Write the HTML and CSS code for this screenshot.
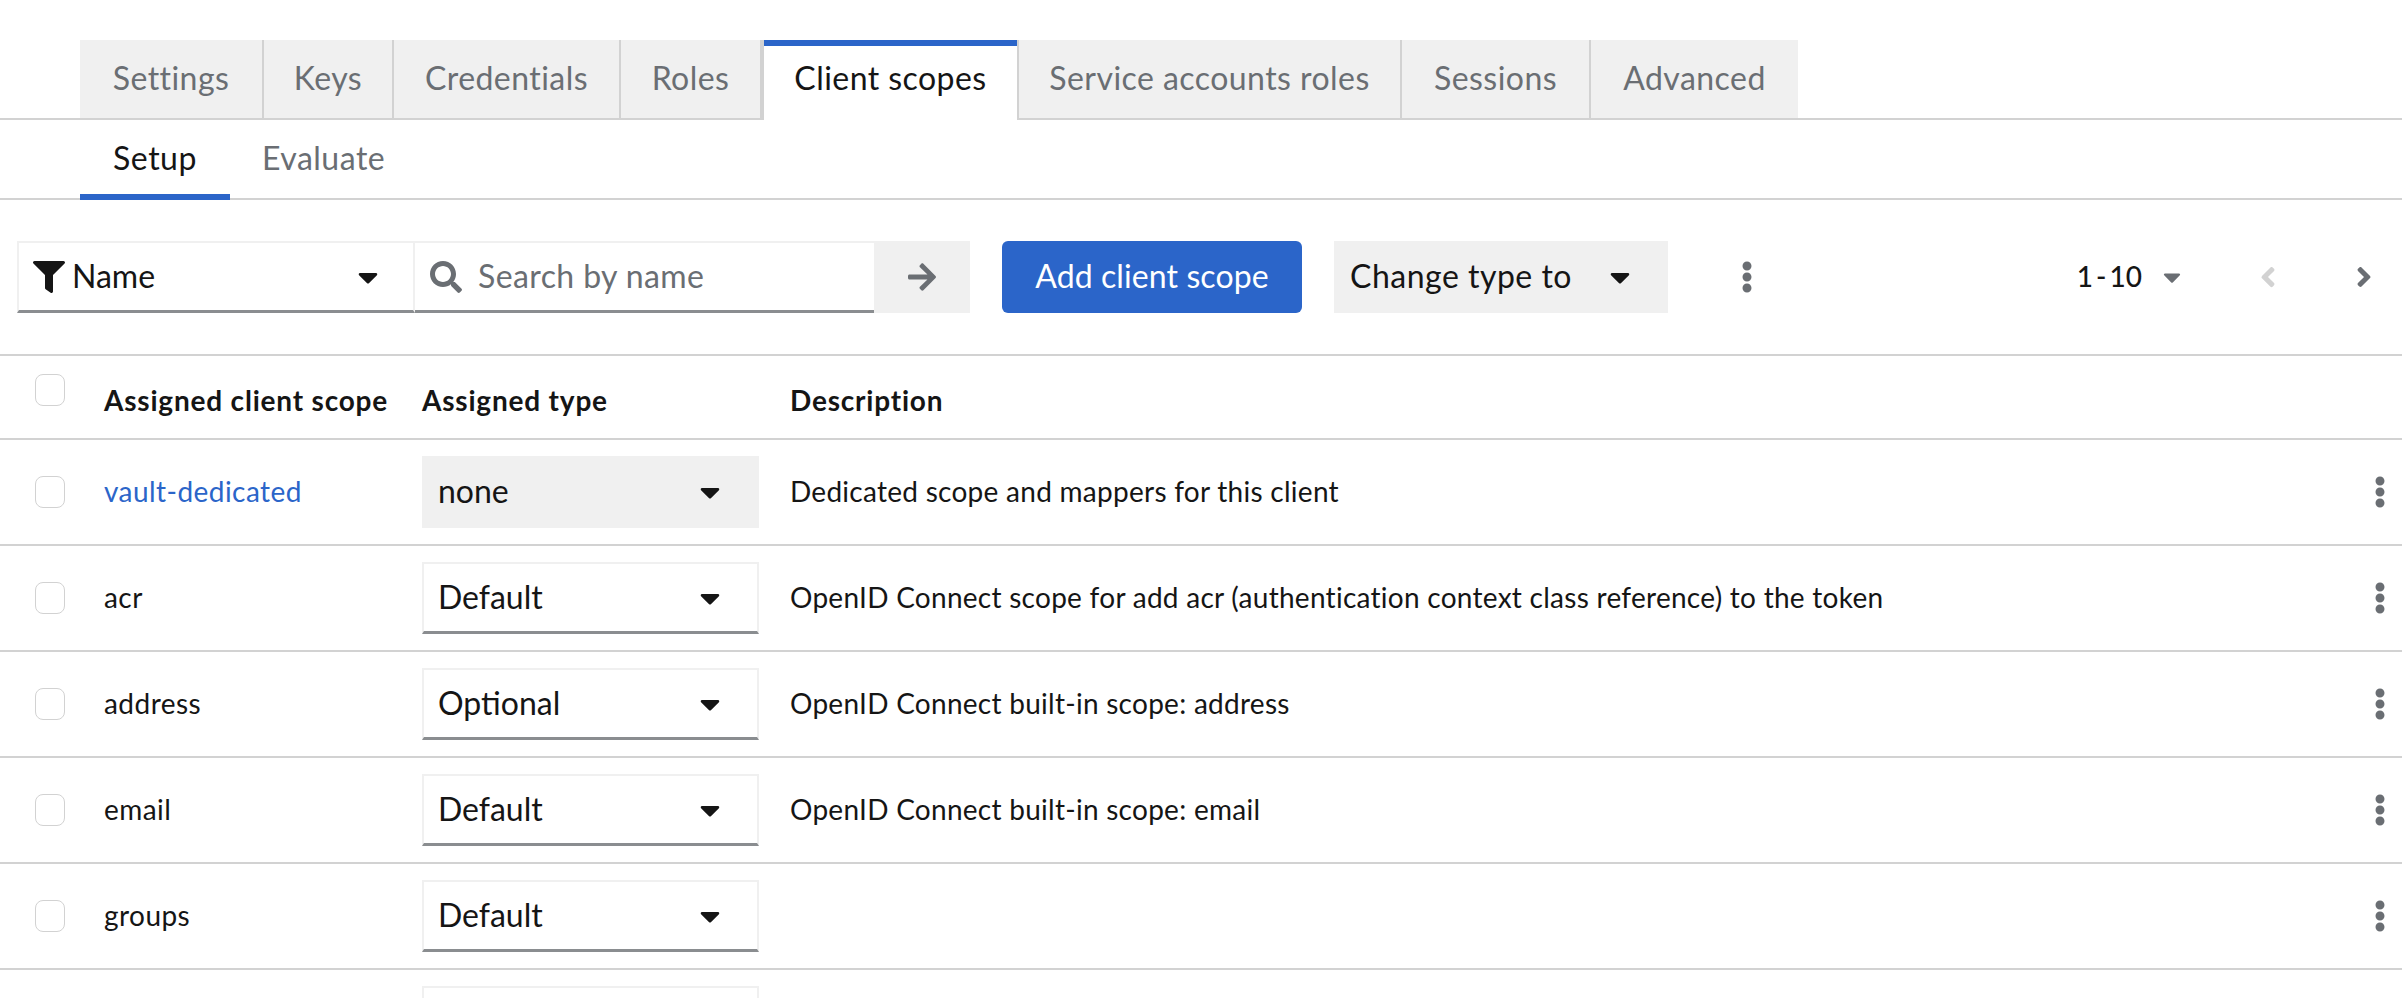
FILE: index.html
```html
<!DOCTYPE html>
<html lang="en">
<head>
    <meta charset="UTF-8">
    <title>Client scopes</title>
    <link rel="stylesheet" href="styles.css">
</head>
<body>
    <svg class="icon-defs" xmlns="http://www.w3.org/2000/svg">
        <symbol id="i-filter" viewBox="0 0 512 512"><path d="M487.976 0H24.028C2.71 0-8.047 25.866 7.058 40.971L192 225.941V432c0 7.831 3.821 15.17 10.237 19.662l80 55.98C298.02 518.69 320 507.493 320 487.98V225.941l184.947-184.97C520.021 25.896 509.338 0 487.976 0z"/></symbol>
        <symbol id="i-search" viewBox="0 0 512 512"><path d="M505 442.7L405.3 343c-4.5-4.5-10.6-7-17-7H372c27.6-35.3 44-79.7 44-128C416 93.1 322.9 0 208 0S0 93.1 0 208s93.1 208 208 208c48.3 0 92.7-16.4 128-44v16.3c0 6.4 2.5 12.5 7 17l99.7 99.7c9.4 9.4 24.6 9.4 33.9 0l28.3-28.3c9.4-9.4 9.4-24.6.1-34zM208 336c-70.7 0-128-57.2-128-128 0-70.7 57.2-128 128-128 70.7 0 128 57.2 128 128 0 70.7-57.2 128-128 128z"/></symbol>
        <symbol id="i-arrow" viewBox="0 0 448 512"><path d="M190.5 66.9l22.2-22.2c9.4-9.4 24.6-9.4 33.9 0L441 239c9.4 9.4 9.4 24.6 0 33.9L246.6 467.3c-9.4 9.4-24.6 9.4-33.9 0l-22.2-22.2c-9.5-9.5-9.3-25 .4-34.3L311.4 296H24c-13.3 0-24-10.7-24-24v-32c0-13.3 10.7-24 24-24h287.4L190.9 101.2c-9.8-9.3-10-24.8-.4-34.3z"/></symbol>
        <symbol id="i-caret" viewBox="0 0 320 512"><path d="M31.3 192h257.3c17.8 0 26.7 21.5 14.1 34.1L174.1 354.8c-7.8 7.8-20.5 7.8-28.3 0L17.2 226.1C4.6 213.5 13.5 192 31.3 192z"/></symbol>
        <symbol id="i-left" viewBox="0 0 256 512"><path d="M31.7 239l136-136c9.4-9.4 24.6-9.4 33.9 0l22.6 22.6c9.4 9.4 9.4 24.6 0 33.9L127.9 256l96.4 96.4c9.4 9.4 9.4 24.6 0 33.9L201.7 413c-9.4 9.4-24.6 9.4-33.9 0l-136-136c-9.5-9.4-9.5-24.6-.1-34z"/></symbol>
        <symbol id="i-right" viewBox="0 0 256 512"><path d="M224.3 273l-136 136c-9.4 9.4-24.6 9.4-33.9 0l-22.6-22.6c-9.4-9.4-9.4-24.6 0-33.9l96.4-96.4-96.4-96.4c-9.4-9.4-9.4-24.6 0-33.9L54.3 103c9.4-9.4 24.6-9.4 33.9 0l136 136c9.5 9.4 9.5 24.6.1 34z"/></symbol>
        <symbol id="i-kebab" viewBox="0 0 192 512"><path d="M96 184c39.8 0 72 32.2 72 72s-32.2 72-72 72-72-32.2-72-72 32.2-72 72-72zM24 80c0 39.8 32.2 72 72 72s72-32.2 72-72S135.8 8 96 8 24 40.2 24 80zm0 352c0 39.8 32.2 72 72 72s72-32.2 72-72-32.2-72-72-72-72 32.2-72 72z"/></symbol>
    </svg>

    <nav class="tabs">
        <a class="tab">Settings</a>
        <a class="tab">Keys</a>
        <a class="tab">Credentials</a>
        <a class="tab">Roles</a>
        <a class="tab active">Client scopes</a>
        <a class="tab">Service accounts roles</a>
        <a class="tab">Sessions</a>
        <a class="tab">Advanced</a>
    </nav>

    <nav class="subtabs">
        <a class="subtab active">Setup</a>
        <a class="subtab">Evaluate</a>
    </nav>

    <div class="toolbar">
        <div class="filter">
            <svg class="icon filter-icon"><use href="#i-filter"/></svg>
            <span class="filter-name">Name</span>
            <svg class="icon caret"><use href="#i-caret"/></svg>
        </div>
        <div class="search">
            <svg class="icon search-icon"><use href="#i-search"/></svg>
            <input class="search-input" placeholder="Search by name">
        </div>
        <button class="arrow-btn"><svg class="icon arrow"><use href="#i-arrow"/></svg></button>
        <button class="primary-btn">Add client scope</button>
        <button class="type-btn"><span class="btn-text">Change type to</span><svg class="icon caret"><use href="#i-caret"/></svg></button>
        <svg class="icon kebab toolbar-kebab"><use href="#i-kebab"/></svg>
        <div class="pager">
            <span class="pager-count">1 - 10</span>
            <svg class="icon pager-caret"><use href="#i-caret"/></svg>
            <svg class="icon chevron prev"><use href="#i-left"/></svg>
            <svg class="icon chevron next"><use href="#i-right"/></svg>
        </div>
    </div>

    <div class="table">
        <div class="row head">
            <span class="check"></span>
            <span class="cell">Assigned client scope</span>
            <span class="cell">Assigned type</span>
            <span class="cell">Description</span>
        </div>
        <div class="row">
            <span class="check"></span>
            <a class="cell name link">vault-dedicated</a>
            <div class="select none"><span>none</span><svg class="icon caret"><use href="#i-caret"/></svg></div>
            <span class="cell">Dedicated scope and mappers for this client</span>
            <svg class="icon kebab"><use href="#i-kebab"/></svg>
        </div>
        <div class="row">
            <span class="check"></span>
            <span class="cell name">acr</span>
            <div class="select"><span>Default</span><svg class="icon caret"><use href="#i-caret"/></svg></div>
            <span class="cell">OpenID Connect scope for add acr (authentication context class reference) to the token</span>
            <svg class="icon kebab"><use href="#i-kebab"/></svg>
        </div>
        <div class="row">
            <span class="check"></span>
            <span class="cell name">address</span>
            <div class="select"><span>Optional</span><svg class="icon caret"><use href="#i-caret"/></svg></div>
            <span class="cell">OpenID Connect built-in scope: address</span>
            <svg class="icon kebab"><use href="#i-kebab"/></svg>
        </div>
        <div class="row">
            <span class="check"></span>
            <span class="cell name">email</span>
            <div class="select"><span>Default</span><svg class="icon caret"><use href="#i-caret"/></svg></div>
            <span class="cell">OpenID Connect built-in scope: email</span>
            <svg class="icon kebab"><use href="#i-kebab"/></svg>
        </div>
        <div class="row">
            <span class="check"></span>
            <span class="cell name">groups</span>
            <div class="select"><span>Default</span><svg class="icon caret"><use href="#i-caret"/></svg></div>
            <span class="cell"></span>
            <svg class="icon kebab"><use href="#i-kebab"/></svg>
        </div>
        <div class="row">
            <span class="check"></span>
            <span class="cell"></span>
            <div class="select"></div>
        </div>
    </div>
</body>
</html>
```

FILE: styles.css
```css
html, body {
    height: 998px;
    overflow: hidden;
}

body {
    margin: 0;
    padding-top: 40px;
    box-sizing: border-box;
    background: #fff;
    color: #151515;
    font-family: "Lato", "Liberation Sans", sans-serif;
    font-size: 28px;
}

.icon-defs {
    display: none;
}

.icon {
    display: block;
    height: 32px;
    fill: currentColor;
    flex: none;
}

.caret {
    width: 20px;
    color: #151515;
}

.kebab {
    width: 12px;
    color: #6a6e73;
}

/* tabs */
.tabs {
    display: grid;
    grid-template-columns: 184px 130px 227px 141px 257px 383px 189px 207px;
    justify-content: start;
    height: 80px;
    box-sizing: border-box;
    padding-left: 80px;
    border-bottom: 2px solid #d2d2d2;
}

.tab {
    display: flex;
    align-items: center;
    justify-content: center;
    height: 78px;
    padding-bottom: 3px;
    background: #f0f0f0;
    border-right: 2px solid #d2d2d2;
    box-sizing: border-box;
    color: #6a6e73;
    font-size: 32px;
    letter-spacing: .45px;
}

.tab:last-child {
    border-right: 0;
}

.tab.active {
    height: 80px;
    padding-bottom: 5px;
    background: #fff;
    color: #151515;
    box-shadow: inset 0 6px 0 #2b65c9;
    border-left: 2px solid #d2d2d2;
    border-right: 2px solid #d2d2d2;
}

.subtabs {
    display: flex;
    height: 80px;
    box-sizing: border-box;
    padding-left: 80px;
    border-bottom: 2px solid #d2d2d2;
}

.subtab {
    display: flex;
    align-items: center;
    justify-content: center;
    height: 80px;
    box-sizing: border-box;
    padding: 0 32px 6px;
    color: #6a6e73;
    font-size: 32px;
    letter-spacing: .5px;
}

.subtab.active {
    width: 150px;
    padding: 0 0 6px;
    color: #151515;
    box-shadow: inset 0 -6px 0 #2b65c9;
}

/* toolbar */
.toolbar {
    display: flex;
    align-items: center;
    height: 72px;
    margin-top: 41px;
    padding-left: 17px;
    font-size: 32px;
}

.filter {
    display: flex;
    align-items: center;
    width: 398px;
    height: 72px;
    box-sizing: border-box;
    padding: 0 35px 0 14px;
    border: 2px solid #f0f0f0;
    border-bottom: 3px solid #8a8d90;
}

.filter-icon {
    width: 32px;
    margin-right: 7px;
}

.filter-name {
    flex: 1;
    padding-bottom: 3px;
}

.search {
    display: flex;
    align-items: center;
    width: 459px;
    height: 72px;
    box-sizing: border-box;
    padding-left: 15px;
    border-top: 2px solid #f0f0f0;
    border-bottom: 3px solid #8a8d90;
    color: #6a6e73;
}

.search-icon {
    width: 32px;
    margin-right: 16px;
}

.search-input {
    flex: 1;
    min-width: 0;
    border: 0;
    outline: 0;
    padding: 0 0 2px;
    font: inherit;
    letter-spacing: .4px;
    color: #151515;
}

.search-input::placeholder {
    color: #6a6e73;
    opacity: 1;
}

.arrow-btn {
    display: flex;
    align-items: center;
    justify-content: center;
    width: 96px;
    height: 72px;
    border: 0;
    padding: 0;
    background: #f0f0f0;
    color: #6a6e73;
}

.arrow {
    width: 28px;
}

.primary-btn {
    height: 72px;
    width: 300px;
    margin-left: 32px;
    border: 0;
    padding: 0 0 3px;
    border-radius: 6px;
    background: #2b65c9;
    color: #fff;
    font: inherit;
    letter-spacing: .1px;
}

.type-btn {
    display: flex;
    align-items: center;
    justify-content: space-between;
    width: 334px;
    height: 72px;
    margin-left: 32px;
    border: 0;
    padding: 0 38px 0 16px;
    background: #f0f0f0;
    color: #151515;
    font: inherit;
}

.btn-text {
    padding-bottom: 3px;
    letter-spacing: .5px;
}

.toolbar-kebab {
    margin-left: 73px;
}

.pager {
    display: flex;
    align-items: center;
    margin-left: auto;
    padding-right: 30px;
    font-size: 28px;
}

.pager-count {
    padding-bottom: 3px;
    font-weight: 500;
    word-spacing: -4px;
}

.pager-caret {
    width: 18px;
    height: 28px;
    margin-left: 21px;
    color: #6a6e73;
}

.chevron {
    width: 16px;
    color: #6a6e73;
}

.prev {
    margin-left: 79px;
    color: #d2d2d2;
}

.next {
    margin-left: 80px;
}

/* table */
.table {
    height: 644px;
    overflow: hidden;
    box-sizing: border-box;
    margin-top: 41px;
    border-top: 2px solid #d2d2d2;
}

.row {
    display: grid;
    grid-template-columns: 104px 318px 368px 1fr 12px;
    align-items: center;
    height: 106px;
    box-sizing: border-box;
    padding-right: 16px;
    border-bottom: 2px solid #d2d2d2;
    letter-spacing: .27px;
}

.cell {
    padding-bottom: 3px;
}

.name {
    letter-spacing: .45px;
}

.head {
    height: 84px;
    padding-top: 8px;
    font-weight: 700;
    letter-spacing: .8px;
}

.head .check {
    margin-top: -22px;
}

.check {
    display: block;
    width: 30px;
    height: 32px;
    margin-left: 35px;
    box-sizing: border-box;
    border: 1px solid #d2d2d2;
    border-radius: 8px;
}

.link {
    color: #2b65c9;
}

.select {
    display: flex;
    align-items: center;
    justify-content: space-between;
    width: 337px;
    height: 72px;
    box-sizing: border-box;
    padding: 0 37px 0 14px;
    border: 2px solid #f0f0f0;
    border-bottom: 3px solid #8a8d90;
    font-size: 32px;
    letter-spacing: 0;
}

.select span {
    padding-bottom: 3px;
}

.select.none {
    background: #f0f0f0;
    border: 0;
    padding-left: 16px;
    padding-right: 39px;
}
```
